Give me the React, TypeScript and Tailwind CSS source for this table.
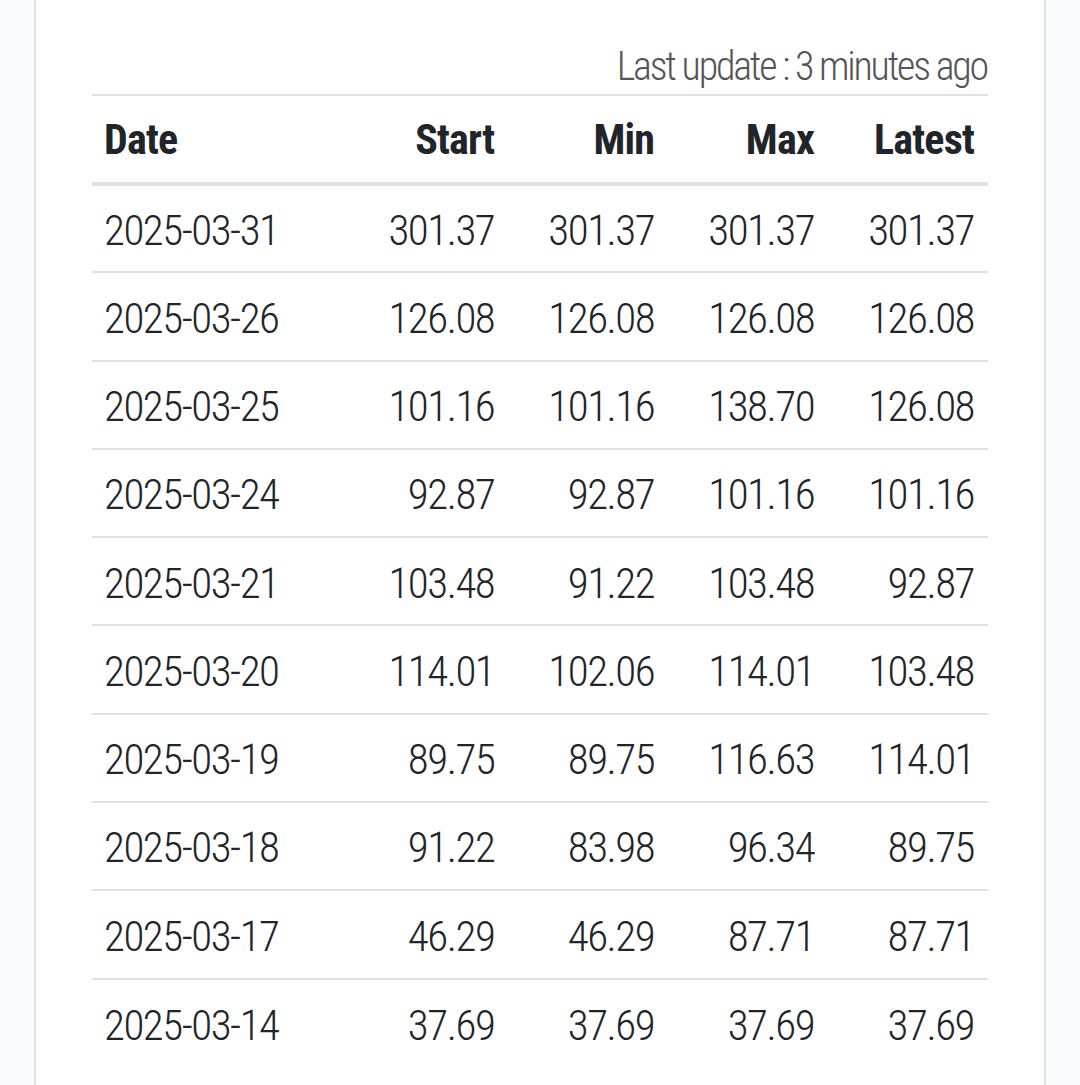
const rows = [
  ["2025-03-31", "301.37", "301.37", "301.37", "301.37"],
  ["2025-03-26", "126.08", "126.08", "126.08", "126.08"],
  ["2025-03-25", "101.16", "101.16", "138.70", "126.08"],
  ["2025-03-24", "92.87", "92.87", "101.16", "101.16"],
  ["2025-03-21", "103.48", "91.22", "103.48", "92.87"],
  ["2025-03-20", "114.01", "102.06", "114.01", "103.48"],
  ["2025-03-19", "89.75", "89.75", "116.63", "114.01"],
  ["2025-03-18", "91.22", "83.98", "96.34", "89.75"],
  ["2025-03-17", "46.29", "46.29", "87.71", "87.71"],
  ["2025-03-14", "37.69", "37.69", "37.69", "37.69"],
];

export default function App() {
  return (
    <div className="h-[1085px] overflow-hidden bg-[#f8f9fa] flex justify-center font-['Roboto_Condensed',sans-serif] text-[#212529]">
      <div className="w-[1012px] bg-white border-x-2 border-[#dee2e6] px-[56px] pt-[40px]">
        <p className="text-right text-[40px] leading-[54px] font-light tracking-[-2.2px] text-[#555] pr-px">
          Last update : 3 minutes ago
        </p>
        <table className="w-full border-collapse">
          <thead>
            <tr className="border-t-2 border-b-4 border-[#dee2e6]">
              <th className="w-[257px] h-[89px] pl-[12px] pr-[14px] text-left text-[42px] font-bold tracking-[-0.8px]">Date</th>
              <th className="h-[89px] px-[14px] text-right text-[42px] font-bold tracking-[-0.8px]">Start</th>
              <th className="h-[89px] px-[14px] text-right text-[42px] font-bold tracking-[-0.8px]">Min</th>
              <th className="h-[89px] px-[14px] text-right text-[42px] font-bold tracking-[-0.8px]">Max</th>
              <th className="w-[159px] h-[89px] px-[14px] text-right text-[42px] font-bold tracking-[-0.8px]">Latest</th>
            </tr>
          </thead>
          <tbody>
            {rows.map((r) => (
              <tr key={r[0]} className="border-b-2 border-[#dee2e6] last:border-b-0">
                {r.map((c, i) => (
                  <td
                    key={i}
                    className={`h-[88.3px] pt-[3px] px-[14px] text-[43px] font-light tracking-[-1.5px] ${i === 0 ? "text-left pl-[12px]" : "text-right w-[160px]"}`}
                  >
                    {c}
                  </td>
                ))}
              </tr>
            ))}
          </tbody>
        </table>
      </div>
    </div>
  );
}
